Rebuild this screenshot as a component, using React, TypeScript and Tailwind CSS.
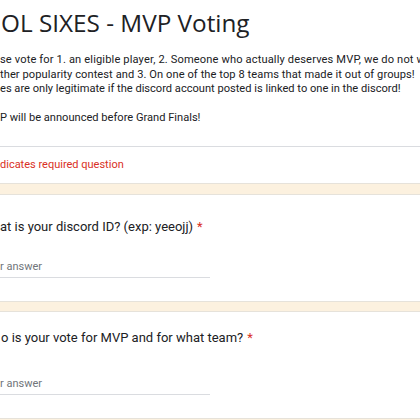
import React from "react";

export default function App() {
  return (
    <div className="w-[420px] h-[420px] overflow-hidden bg-[#fcf1df] whitespace-nowrap" style={{ fontFamily: "Roboto, 'Liberation Sans', sans-serif" }}>
      <div className="bg-white border-b border-[#e6e2da]">
        <div className="h-[147px] border-b border-[#dadce0] flex flex-col">
          <div className="h-[44px] pt-[7px] text-[24.3px] leading-[32px] text-[#202124] pl-[1px]" style={{ fontFamily: "'Open Sans', Inter, sans-serif" }}>
            OL SIXES - MVP Voting
          </div>
          <div className="mt-[9px] text-[11.1px] leading-[14.5px] text-[#202124] flex flex-col">
            <span className="tracking-[0.14px]">se vote for 1. an eligible player, 2. Someone who actually deserves MVP, we do not want</span>
            <span className="tracking-[0.08px]">ther popularity contest and 3. On one of the top 8 teams that made it out of groups!</span>
            <span>es are only legitimate if the discord account posted is linked to one in the discord!</span>
            <span>&nbsp;</span>
            <span>P will be announced before Grand Finals!</span>
          </div>
        </div>
        <div className="h-[36px] pt-[1px] flex items-center text-[11px] text-[#d93025]">dicates required question</div>
      </div>
      <div className="h-[10px]" />
      <div className="bg-white border-y border-[#e6e2da] h-[108px] flex flex-col">
        <div className="mt-[22px] h-[20px] flex items-center text-[13px] text-[#202124]">
          at is your discord ID? (exp: yeeojj)<span className="text-[#d93025] ml-[4px]">*</span>
        </div>
        <div className="mt-[22px] h-[16px] flex items-center text-[11px] text-[#70757a]">r answer</div>
        <div className="mt-[2px] w-[210px] h-px bg-[#dadce0]" />
      </div>
      <div className="h-[9px]" />
      <div className="bg-white border-y border-[#e6e2da] h-[108px] flex flex-col">
        <div className="mt-[16px] h-[20px] flex items-center text-[13px] text-[#202124] pl-[1px]">
          o is your vote for MVP and for what team?<span className="text-[#d93025] ml-[4px]">*</span>
        </div>
        <div className="mt-[28px] h-[16px] flex items-center text-[11px] text-[#70757a]">r answer</div>
        <div className="mt-[2px] w-[210px] h-px bg-[#dadce0]" />
      </div>
    </div>
  );
}
